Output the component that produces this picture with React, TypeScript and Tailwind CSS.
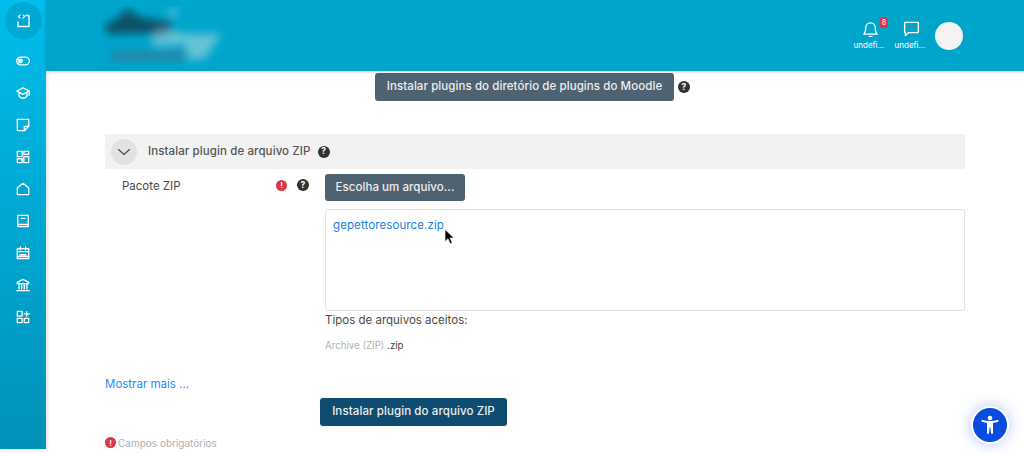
import { ReactNode } from "react";

const Icon = ({ children, size = 14 }: { children: ReactNode; size?: number }) => (
  <svg
    width={size}
    height={size}
    viewBox="0 0 16 16"
    fill="none"
    stroke="currentColor"
    strokeWidth={1.5}
    strokeLinecap="round"
    strokeLinejoin="round"
  >
    {children}
  </svg>
);

const sideIcons: ReactNode[] = [
  <>
    <rect x="0.800" y="3.500" width="14.400" height="9" rx="4.500" />
    <circle cx="5" cy="8" r="2" fill="currentColor" />
  </>,
  <>
    <path d="M8 2 1 5.800 8 9.500 15 5.800Z" />
    <path d="M3.500 8v3.500c1 1.500 2.800 2.500 4.500 2.500s3.500-1 4.500-2.500V8" />
    <path d="M15 5.800v5" />
  </>,
  <>
    <path d="M1.500 1.500h13v8l-5 5h-8Z" />
    <path d="M14.500 9.500h-5v5" />
  </>,
  <>
    <rect x="1.500" y="1.500" width="5.500" height="6" />
    <rect x="9" y="1.500" width="5.500" height="3.500" />
    <rect x="1.500" y="10" width="5.500" height="4.500" />
    <rect x="9" y="7.500" width="5.500" height="7" />
  </>,
  <path d="M8 1.500 1.500 6.500v8h13v-8Z" />,
  <>
    <path d="M2 12V1.500h12v13H3.500A1.500 1.500 0 0 1 2 13v-1h12" />
    <path d="M6 5h4" />
  </>,
  <>
    <rect x="1.500" y="3" width="13" height="11.500" />
    <path d="M5 1v3.500M11 1v3.500M1.500 6.500h13M4.500 10h7M1.500 12h13" />
  </>,
  <>
    <path d="M8 1.500 1.500 5v1.500h13V5Z" />
    <path d="M3.500 7v5.500M6.500 7v5.500M9.500 7v5.500M12.500 7v5.500M1 14.500h14" />
  </>,
  <>
    <rect x="1.500" y="1.500" width="5.500" height="5.500" />
    <rect x="1.500" y="9.500" width="5.500" height="5" />
    <rect x="9.500" y="9.500" width="5" height="5" />
    <path d="M9.500 4.500h5.500M12.200 2v5" />
  </>,
];

const HelpDot = () => (
  <span className="flex h-[12px] w-[12px] items-center justify-center rounded-full bg-[#333333] text-[8.500px] font-bold leading-none text-white">
    ?
  </span>
);

const RedDot = () => (
  <span className="flex h-[11px] w-[11px] items-center justify-center rounded-full bg-[#dc3545] text-[8px] font-bold leading-none text-white">
    !
  </span>
);

const Sidebar = () => (
  <aside className="flex h-[449px] w-[46px] shrink-0 flex-col items-center bg-gradient-to-b from-[#00bdeb] to-[#0092b8] pt-[2px] text-white shadow-[1px_0_4px_rgba(0,0,0,0.15)]">
    <div className="flex h-[37px] w-[37px] shrink-0 items-center justify-center rounded-full bg-[#00a9d4]">
      <Icon size={16}>
        <path d="M3 9v4.500h11v-11h-3" strokeWidth={1.300} />
        <path d="M5 2 3.500 3.500 5 5M8 2l1.500 1.500L8 5" strokeWidth={1.100} />
      </Icon>
    </div>
    <div className="mt-[15px] flex flex-col items-center gap-[18px]">
      {sideIcons.map((icon, i) => (
        <Icon key={i}>{icon}</Icon>
      ))}
    </div>
  </aside>
);

const Header = () => (
  <header className="relative z-10 flex h-[71px] shrink-0 items-center justify-between bg-[#00a5cc] pl-[55px] pr-[61px] shadow-[0_1px_3px_rgba(0,0,0,0.2)]">
    <svg width="130" height="62" viewBox="0 0 130 62" className="mt-[2px]">
      <defs>
        <filter id="logoBlur" x="-20%" y="-20%" width="140%" height="140%">
          <feGaussianBlur stdDeviation="4" />
        </filter>
      </defs>
      <g filter="url(#logoBlur)">
        <path d="M4 18 C16 16 22 6 27 2 C31 6 34 14 70 15 L71 27 L6 28Z" fill="#084f68" />
        <circle cx="72" cy="6" r="5" fill="#44bcd8" />
        <path d="M50 32 C60 22 72 24 84 28 L120 28 L104 52 L88 54 L84 38 L54 40Z" fill="#66c4d6" />
        <rect x="9" y="45" width="76" height="10" rx="5" fill="#2585a5" />
        <circle cx="61" cy="27" r="5" fill="#5c8aa8" />
      </g>
    </svg>
    <div className="flex items-center text-white">
      <div className="relative mb-[3px] flex w-[42px] flex-col items-center">
        <svg width="19" height="19" viewBox="0 0 20 20" fill="none" stroke="currentColor" strokeWidth="1.400" strokeLinejoin="round" className="ml-[3px]">
          <path d="M3 16c1.500-1.500 2-3 2-7a5 5 0 0 1 10 0c0 4 .5 5.500 2 7Z" />
          <path d="M8.500 18.200h3" strokeLinecap="round" />
        </svg>
        <span className="absolute left-[32px] top-[-2px] flex h-[11px] w-[8px] items-center justify-center rounded-[2px] bg-[#dc3545] text-[7px] leading-none">
          8
        </span>
        <span className="mt-[2px] text-[8px] leading-[10px]">undefi...</span>
      </div>
      <div className="mb-[3px] ml-[-1px] flex w-[42px] flex-col items-center">
        <svg width="19" height="19" viewBox="0 0 20 20" fill="none" stroke="currentColor" strokeWidth="1.400" strokeLinejoin="round" className="ml-[3px]">
          <path d="M2.800 3.500h14.400v10.800H7l-3.500 3v-3H2.800Z" />
        </svg>
        <span className="mt-[2px] text-[8px] leading-[10px]">undefi...</span>
      </div>
      <div className="ml-[4px] h-[28px] w-[28px] rounded-full bg-[#f3f3f3]" />
    </div>
  </header>
);

export default function App() {
  return (
    <div
      className="relative flex h-[453px] w-[1024px] overflow-hidden bg-white text-[#4a4a4a]"
      style={{ fontFamily: '"Inter", "Noto Sans", sans-serif' }}
    >
      <Sidebar />
      <main className="flex min-w-0 flex-1 flex-col">
        <Header />
        <div className="px-[59px]">
          <div className="mt-[2px] flex items-center pl-[270px]">
            <button className="h-[28px] w-[299px] rounded-[3px] bg-[#4f6272] text-[11.500px] font-medium tracking-[0.08px] text-[#eeeeee]">
              Instalar plugins do diretório de plugins do Moodle
            </button>
            <span className="ml-[4px]">
              <HelpDot />
            </span>
          </div>

          <section className="mt-[33px] flex h-[35px] items-center bg-[#f2f2f2] pl-[6px]">
            <span className="flex h-[26px] w-[26px] items-center justify-center rounded-full bg-[#e2e2e2] text-[#444444]">
              <svg width="14" height="14" viewBox="0 0 14 14" fill="none" stroke="currentColor" strokeWidth="1.100" strokeLinecap="round">
                <path d="M1.500 4.500 7 9.500l5.500-5" />
              </svg>
            </span>
            <span className="ml-[11px] text-[11.500px] font-medium tracking-[0.1px] text-[#555555]">Instalar plugin de arquivo ZIP</span>
            <span className="ml-[7px]">
              <HelpDot />
            </span>
          </section>

          <div className="mt-[4px] flex">
            <div className="flex h-[27px] w-[220px] items-center pb-[3px] pl-[17px]">
              <span className="w-[154px] pt-[3px] text-[11.500px]">Pacote ZIP</span>
              <RedDot />
              <span className="ml-[10px]">
                <HelpDot />
              </span>
            </div>
            <div className="flex-1">
              <button className="h-[27px] w-[140px] rounded-[3px] bg-[#4f6272] text-[11.500px] font-medium tracking-[0.05px] text-[#eeeeee]">
                Escolha um arquivo...
              </button>
              <div className="relative mt-[8px] h-[102px] rounded-[2px] border border-[#e3e3e3] px-[7px] pt-[8px] text-[11.500px] leading-[14px] tracking-[0.1px] text-[#1a80e0]">
                gepettoresource.zip
                <svg width="12" height="16" viewBox="0 0 12 16" className="absolute left-[118px] top-[19px]">
                  <path d="M1 0.500v12l3-2.800 2.200 5 2-.9-2.200-4.800h4Z" fill="#000000" stroke="#ffffff" strokeWidth="0.600" />
                </svg>
              </div>
              <p className="mt-[2px] text-[11.500px] leading-[14px]">Tipos de arquivos aceitos:</p>
              <p className="mt-[13px] text-[9.700px] leading-[12px] text-[#b0b0b0]">
                Archive (ZIP) <span className="text-[#444444]">.zip</span>
              </p>
            </div>
          </div>

          <a className="mt-[25px] block text-[11.500px] leading-[14px] text-[#1a8cff]">Mostrar mais ...</a>

          <div className="mt-[6px] pl-[215px]">
            <button className="h-[28px] w-[187px] rounded-[3px] bg-[#0f4c71] text-[11.500px] font-medium tracking-[0.1px] text-[#eeeeee]">
              Instalar plugin do arquivo ZIP
            </button>
          </div>

          <div className="mt-[11px] flex items-center gap-[2px] text-[10px] leading-[12px] text-[#b0b0b0]">
            <RedDot />
            Campos obrigatórios
          </div>
        </div>
      </main>

      <button className="absolute left-[971px] top-[406px] flex h-[38px] w-[38px] items-center justify-center rounded-full border-2 border-white bg-[#0a4be0] text-white shadow-[0_0_14px_rgba(40,90,255,0.35)]">
        <svg width="24" height="24" viewBox="0 0 24 24" fill="currentColor">
          <circle cx="12" cy="5" r="2.300" />
          <path d="M3.500 8.300c-.4-.9.200-1.500 1-1.300 5 1.300 10 1.300 15 0 .8-.2 1.400.4 1 1.300-.2.400-.5.600-1 .7l-4.500 1v10c0 1.200-1.800 1.200-2 0l-.6-5.500h-.8L11 20c-.2 1.200-2 1.200-2 0V10L4.500 9c-.5-.1-.8-.3-1-.7Z" />
        </svg>
      </button>
    </div>
  );
}
